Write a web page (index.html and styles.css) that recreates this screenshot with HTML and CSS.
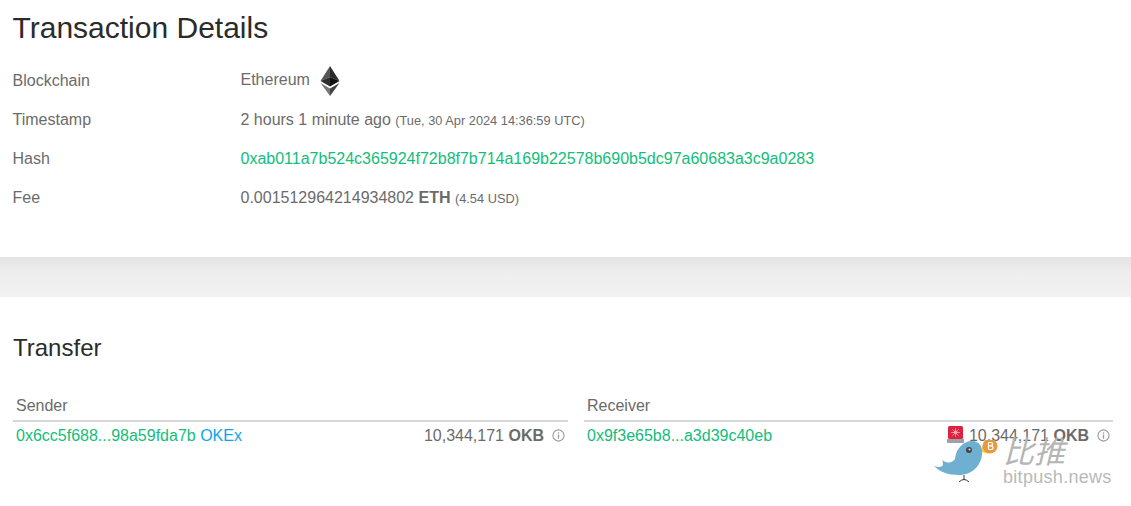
FILE: index.html
```html
<!DOCTYPE html>
<html lang="en">
  <head>
    <meta charset="UTF-8" />
    <title>Transaction Details</title>
    <link rel="stylesheet" href="styles.css">
  </head>
  <body>
    <section class="details">
      <h1>Transaction Details</h1>
      <div class="row">
        <span class="label">Blockchain</span>
        <span class="value">Ethereum<svg class="eth" viewBox="0 0 20 30" width="20" height="30">
            <polygon points="10,0 10,11 0.5,15" fill="#555" />
            <polygon points="10,0 19.5,15 10,11" fill="#2b2b2b" />
            <polygon points="0.5,15 10,11 10,20.5" fill="#2e2e2e" />
            <polygon points="19.5,15 10,11 10,20.5" fill="#111" />
            <polygon points="0.5,17 10,22.6 10,30" fill="#777" />
            <polygon points="19.5,17 10,22.6 10,30" fill="#444" />
          </svg></span>
      </div>
      <div class="row">
        <span class="label">Timestamp</span>
        <span class="value">2 hours 1 minute ago <small>(Tue, 30 Apr 2024 14:36:59 UTC)</small></span>
      </div>
      <div class="row">
        <span class="label">Hash</span>
        <span class="value"><a class="addr" href="#">0xab011a7b524c365924f72b8f7b714a169b22578b690b5dc97a60683a3c9a0283</a></span>
      </div>
      <div class="row">
        <span class="label">Fee</span>
        <span class="value">0.001512964214934802 <b>ETH</b> <small>(4.54 USD)</small></span>
      </div>
    </section>

    <div class="band"></div>

    <section class="transfer">
      <h2>Transfer</h2>
      <div class="parties">
        <div class="party party-sender">
          <div class="party-head">Sender</div>
          <div class="party-row">
            <span><a class="addr" href="#">0x6cc5f688...98a59fda7b</a> <a class="owner" href="#">OKEx</a></span>
            <span class="amount">10,344,171 <b>OKB</b><svg class="info" viewBox="0 0 14 14" width="13" height="13">
                <circle cx="7" cy="7" r="6" fill="none" stroke="#999" stroke-width="1.2" />
                <rect x="6.3" y="6" width="1.4" height="4.4" fill="#999" />
                <rect x="6.3" y="3.6" width="1.4" height="1.4" fill="#999" />
              </svg></span>
          </div>
        </div>
        <div class="party party-receiver">
          <div class="party-head">Receiver</div>
          <div class="party-row">
            <span><a class="addr" href="#">0x9f3e65b8...a3d39c40eb</a></span>
            <span class="amount"><svg class="siren" viewBox="0 0 17 17" width="17" height="17">
                <rect x="1" y="0" width="15" height="13" rx="1.5" fill="#e0203c" />
                <circle cx="8.5" cy="6.5" r="2" fill="#f7a8b4" />
                <path d="M8.5 2V11M4 6.5H13M5.3 3.3L11.7 9.7M11.7 3.3L5.3 9.7" stroke="#f7a8b4" stroke-width="0.8" />
                <rect x="0" y="13" width="17" height="4" fill="#9aa3ad" />
              </svg>10,344,171 <b>OKB</b><svg class="info" viewBox="0 0 14 14" width="13" height="13">
                <circle cx="7" cy="7" r="6" fill="none" stroke="#999" stroke-width="1.2" />
                <rect x="6.3" y="6" width="1.4" height="4.4" fill="#999" />
                <rect x="6.3" y="3.6" width="1.4" height="1.4" fill="#999" />
              </svg></span>
          </div>
        </div>
      </div>
    </section>

    <div class="watermark">
      <svg class="bird" viewBox="0 0 66 46" width="66" height="46">
        <path d="M0 26 C7 28 11 27 8 20 C14 24 18 23 21 19 C22 8 30 1 38 1 C46 1 49 8 48 14 C47 26 38 35 25 35 C14 35 6 32 0 26 Z" fill="#6fb0d0" />
        <circle cx="35" cy="10" r="3" fill="#444" />
        <circle cx="35.5" cy="9.5" r="1" fill="#ddd" />
        <path d="M48 6 L54 4 L50 9 L54 14 L48 12 Z" fill="#f2d24a" />
        <circle cx="56" cy="6" r="7.5" fill="#e89a3c" />
        <path d="M54.5 2.5V9.5M54.5 2.5H57C59 2.5 59 5.8 57 5.8H54.5M57 5.8C59.6 5.8 59.6 9.5 57 9.5H54.5" fill="none" stroke="#fff" stroke-width="1.2" />
        <path d="M30 35 L30 40 M25 42 Q30 37 35 42" fill="none" stroke="#333" stroke-width="1" />
      </svg>
      <div class="wm-text">
        <div class="wm-cn">比推</div>
        <div class="wm-en">bitpush.news</div>
      </div>
    </div>
  </body>
</html>
```

FILE: styles.css
```css
body {
  margin: 0;
  font-family: "Liberation Sans", Arial, sans-serif;
  font-size: 16px;
  color: #6b6b6b;
  background: #fff;
  overflow: hidden;
  position: relative;
  height: 506px;
}

a {
  text-decoration: none;
}

.details {
  height: 257px;
  padding: 10px 13px 0 12.5px;
  box-sizing: border-box;
}

h1 {
  margin: 0 0 15px;
  font-size: 30px;
  line-height: 36px;
  font-weight: 400;
  color: #2b2b2b;
}

.row {
  display: flex;
  align-items: center;
  height: 39px;
}

.label {
  width: 228px;
  flex: none;
}

.value small {
  font-size: 12.8px;
}

.eth {
  margin-left: 10px;
  vertical-align: middle;
}

.addr {
  color: #13bd7c;
}

.owner {
  color: #0aa5e8;
}

.band {
  height: 40px;
  background: linear-gradient(#e3e3e3, #eeeeee 40%, #f1f1f1);
}

.transfer {
  padding: 36px 13px 0;
}

h2 {
  margin: 0 0 30px;
  font-size: 24px;
  line-height: 30px;
  font-weight: 400;
  color: #2b2b2b;
}

.parties {
  display: flex;
  gap: 16px;
  width: 1100px;
}

.party-sender {
  width: 555px;
}

.party-receiver {
  width: 529px;
}

.party-head {
  padding: 0 3px;
  height: 27px;
  line-height: 25px;
  border-bottom: 2px solid #d6d6d6;
}

.party-row {
  display: flex;
  justify-content: space-between;
  padding: 4px 3px;
  line-height: 20px;
}

.info {
  margin-left: 8px;
  vertical-align: -1px;
}

.siren {
  margin-right: 5px;
  vertical-align: -2px;
}

.watermark {
  position: absolute;
  left: 934px;
  top: 440px;
  display: flex;
}

.wm-text {
  margin: -7px 0 0 3px;
}

.wm-cn {
  font-family: "Noto Sans CJK SC", sans-serif;
  font-size: 31px;
  line-height: 34px;
  font-style: italic;
  color: #b5b5b5;
}

.wm-en {
  font-size: 18px;
  line-height: 20px;
  color: #b9b9b9;
  letter-spacing: 0.3px;
  margin-top: 0;
}
```
